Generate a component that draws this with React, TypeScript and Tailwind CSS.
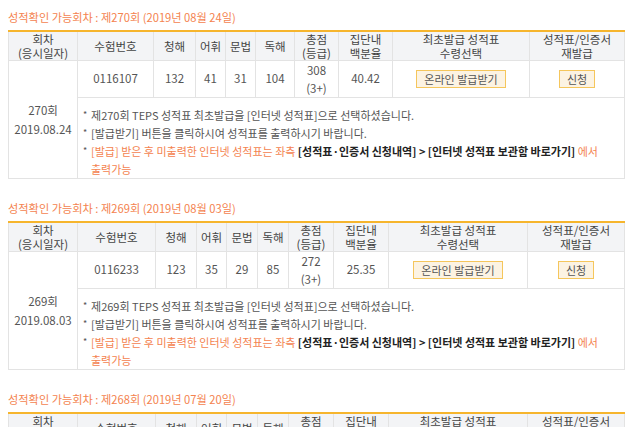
import React from "react";

type Row = {
  round: string;
  date: string;
  title: string;
  num: string;
  l: string;
  v: string;
  g: string;
  r: string;
  total: string;
  pct: string;
  widths: number[];
};

const rows: Row[] = [
  {
    round: "270",
    date: "2019.08.24",
    title: "제270회 (2019년 08월 24일)",
    num: "0116107",
    l: "132",
    v: "41",
    g: "31",
    r: "104",
    total: "308",
    pct: "40.42",
    widths: [69, 76, 42, 30, 30, 39, 44, 54, 137, 95],
  },
  {
    round: "269",
    date: "2019.08.03",
    title: "제269회 (2019년 08월 03일)",
    num: "0116233",
    l: "123",
    v: "35",
    g: "29",
    r: "85",
    total: "272",
    pct: "25.35",
    widths: [69, 78, 41, 30, 31, 31, 45, 55, 139, 97],
  },
  {
    round: "268",
    date: "2019.07.20",
    title: "제268회 (2019년 07월 20일)",
    num: "0116233",
    l: "123",
    v: "35",
    g: "29",
    r: "85",
    total: "272",
    pct: "25.35",
    widths: [69, 78, 41, 30, 31, 31, 45, 55, 139, 97],
  },
];

const th =
  "border border-[#e3e3e3] border-t-2 border-t-[#f6b52d] bg-[#f3f4f6] font-normal text-[#444] text-center align-middle leading-[14px] p-0";
const td = "border border-[#e3e3e3] text-center align-middle p-0 text-[#555]";
const btn =
  "inline-block h-[18px] leading-[16px] px-[7px] border border-[#f5c65c] bg-[#fcf3e3] text-[11px] text-[#555]";

function Block({ r }: { r: Row }) {
  return (
    <div className="mb-[20px]">
      <div className="h-[18px] leading-[18px] text-[11.2px] text-[#f4834f] mb-[4px]">
        성적확인 가능회차 : {r.title}
      </div>
      <table className="w-[616px] table-fixed border-collapse">
        <colgroup>
          {r.widths.map((w, i) => (
            <col key={i} style={{ width: w }} />
          ))}
        </colgroup>
        <thead>
          <tr className="h-[29px]">
            <th className={th}>
              회차
              <br />
              (응시일자)
            </th>
            <th className={th}>수험번호</th>
            <th className={th}>청해</th>
            <th className={th}>어휘</th>
            <th className={th}>문법</th>
            <th className={th}>독해</th>
            <th className={th}>
              총점
              <br />
              (등급)
            </th>
            <th className={th}>
              집단내
              <br />
              백분율
            </th>
            <th className={th}>
              최초발급 성적표
              <br />
              수령선택
            </th>
            <th className={th}>
              성적표/인증서
              <br />
              재발급
            </th>
          </tr>
        </thead>
        <tbody>
          <tr className="h-[36px]">
            <td rowSpan={2} className={td + " leading-[19px] text-[11.5px]"}>
              {r.round}회
              <br />
              {r.date}
            </td>
            <td className={td}>{r.num}</td>
            <td className={td}>{r.l}</td>
            <td className={td}>{r.v}</td>
            <td className={td}>{r.g}</td>
            <td className={td}>{r.r}</td>
            <td className={td + " leading-[18px]"}>
              {r.total}
              <br />
              (3+)
            </td>
            <td className={td}>{r.pct}</td>
            <td className={td}>
              <span className={btn}>온라인 발급받기</span>
            </td>
            <td className={td}>
              <span className={btn}>신청</span>
            </td>
          </tr>
          <tr>
            <td
              colSpan={9}
              className="border border-[#e3e3e3] text-left align-top pl-[5px] pt-[8px] pb-0 text-[11px] leading-[18px] text-[#555]"
            >
              <div className="flex">
                <span className="w-[8px] shrink-0 text-[9px]">*</span>
                <span>제{r.round}회 TEPS 성적표 최초발급을 [인터넷 성적표]으로 선택하셨습니다.</span>
              </div>
              <div className="flex">
                <span className="w-[8px] shrink-0 text-[9px]">*</span>
                <span>[발급받기] 버튼을 클릭하시여 성적표를 출력하시기 바랍니다.</span>
              </div>
              <div className="flex">
                <span className="w-[8px] shrink-0 text-[9px]">*</span>
                <span className="text-[#f4834f]">
                  [발급] 받은 후 미출력한 인터넷 성적표는 좌측{" "}
                  <b className="text-[#222] font-bold">
                    [성적표·인증서 신청내역] &gt; [인터넷 성적표 보관함 바로가기]
                  </b>{" "}
                  에서
                  <br />
                  출력가능
                </span>
              </div>
            </td>
          </tr>
        </tbody>
      </table>
    </div>
  );
}

export default function App() {
  return (
    <div
      className="w-[640px] h-[427px] overflow-hidden bg-white pt-[8px] pl-[8px] text-[11.5px]"
      style={{ fontFamily: '"Noto Sans CJK KR", "Noto Sans", sans-serif' }}
    >
      {rows.map((r) => (
        <Block key={r.round} r={r} />
      ))}
    </div>
  );
}
